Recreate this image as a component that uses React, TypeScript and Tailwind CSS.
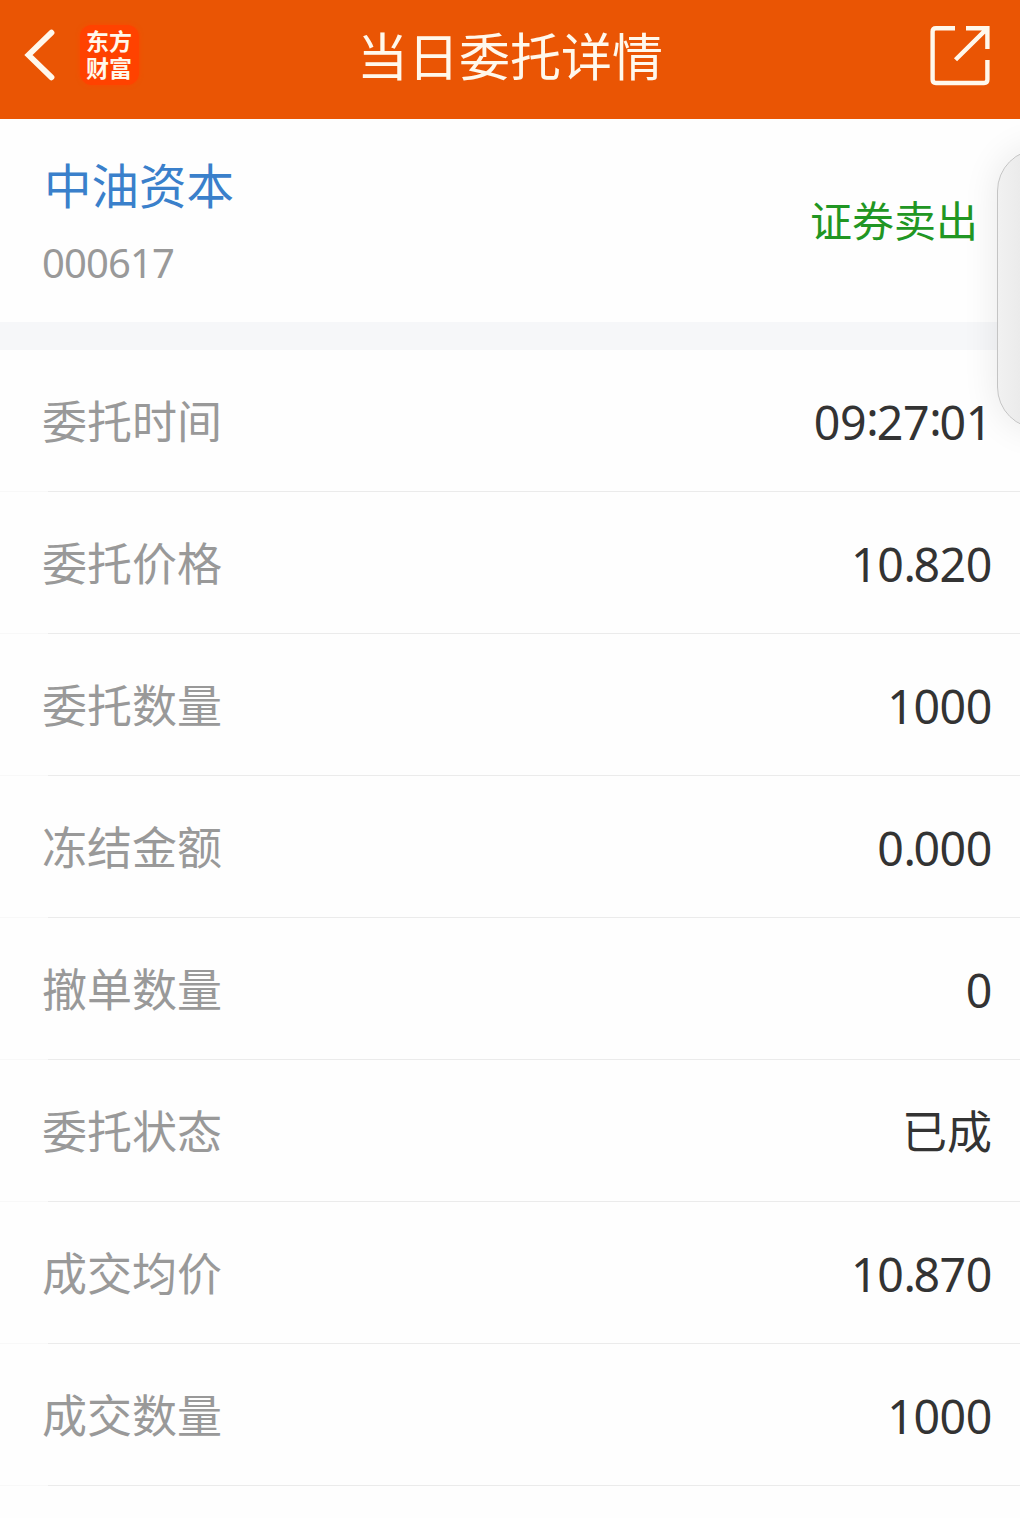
const rows = [
    { label: '委托时间', value: '09:27:01' },
    { label: '委托价格', value: '10.820' },
    { label: '委托数量', value: '1000' },
    { label: '冻结金额', value: '0.000' },
    { label: '撤单数量', value: '0' },
    { label: '委托状态', value: '已成' },
    { label: '成交均价', value: '10.870' },
    { label: '成交数量', value: '1000' },
];

const Header = () => (
    <header className="grid h-[119px] grid-cols-[1fr_auto_1fr] items-start bg-[#ea5504] text-[#fff8ec]">
        <div className="flex items-start">
            <button aria-label="返回" className="mt-[28px] ml-[23px]">
                <svg width="32" height="54" viewBox="0 0 32 54" fill="none" stroke="currentColor" strokeWidth="5.8" strokeLinecap="round">
                    <path d="M28.5 4.7 L5.5 27 L28.5 49.3" />
                </svg>
            </button>
            <div className="mt-[25px] ml-[25px] flex h-[60px] w-[59px] flex-col items-center rounded-[12px] bg-[#ff4200] pt-[2px] pr-[1px] text-[23px] leading-[27px] font-bold shadow-[0_0_4px_#fa4a02]">
                <span>东方</span>
                <span>财富</span>
            </div>
        </div>
        <h1 className="mt-[17px] text-[51px] leading-[74px]">当日委托详情</h1>
        <button aria-label="分享" className="mt-[25px] mr-[29px] justify-self-end">
            <svg width="61" height="61" viewBox="0 0 61 61" fill="none" stroke="currentColor" strokeWidth="4.4">
                <path d="M25 3.2 H6 Q2.6 3.2 2.6 6.6 V54.6 Q2.6 58 6 58 H54 Q57.4 58 57.4 54.6 V35" />
                <path d="M36 3.2 H57.4 V24 M57 3.6 L25.5 34.8" />
            </svg>
        </button>
    </header>
);

const Value = ({ text }: { text: string }) => {
    if (!/^[\d.:]+$/.test(text)) {
        return <span className="text-[45px] leading-[66px] text-[#333]">{text}</span>;
    }

    // the separators sit tighter than the digits, and the colon is centred on them
    return (
        <span className="pt-[3px] font-['Noto_Sans',sans-serif] text-[46.5px] leading-[66px] tracking-[-0.4px] text-[#333]">
            {text.split(/([.:])/).map((part, i) => {
                if (part === ':') return <span key={i} className="relative -top-[4px] tracking-[-2px]">:</span>;
                if (part === '.') return <span key={i} className="tracking-[-2.5px]">.</span>;
                return part;
            })}
        </span>
    );
};

const App = () => {
    return (
        <div className="relative h-[1518px] w-[1020px] overflow-hidden bg-[#fefefe] font-['Noto_Sans_CJK_SC',sans-serif]">
            <Header />
            <section className="flex h-[203px] justify-between pr-[42px] pl-[43px]">
                <div>
                    <h2 className="mt-[30px] ml-[1px] text-[47.5px] leading-[70px] text-[#3a80cb]">中油资本</h2>
                    <p className="mt-[16px] -ml-px font-['Noto_Sans',sans-serif] text-[40px] leading-[56px] tracking-[-0.9px] text-[#999]">000617</p>
                </div>
                <span className="mt-[70px] text-[42px] leading-[60px] text-[#219623]">证券卖出</span>
            </section>
            <div className="h-[28px] bg-[#f6f7f9]" />
            <ul>
                {rows.map((row) => (
                    <li key={row.label} className="flex h-[142px] flex-col">
                        <div className="flex h-[141px] items-center justify-between pr-[28px] pb-px pl-[42px]">
                            <span className="text-[45px] leading-[66px] text-[#999]">{row.label}</span>
                            <Value text={row.value} />
                        </div>
                        <div className="flex h-px">
                            <div className="w-[48px] bg-[#f8f8f8]" />
                            <div className="flex-1 bg-[#ebebeb]" />
                        </div>
                    </li>
                ))}
            </ul>
            {/* edge handle floating over the page */}
            <div className="absolute top-[149px] left-[997px] h-[280px] w-[90px] rounded-[42px] border border-[#c4c4c4] bg-linear-to-r from-[#f1f1f1] from-0% to-[#ebebeb] to-25% shadow-[0_0_36px_rgba(0,0,0,0.09)]" />
        </div>
    );
};

export default App;
